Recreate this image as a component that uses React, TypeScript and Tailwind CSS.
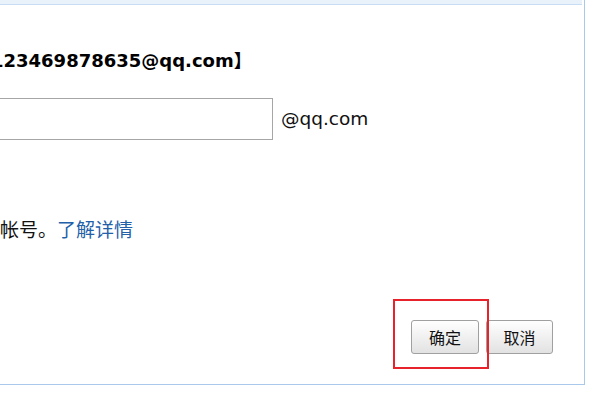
export default function App() {
  const latin = { fontFamily: '"DejaVu Sans", "Noto Sans CJK SC", sans-serif' };
  const cjk = { fontFamily: '"Noto Sans CJK SC", "DejaVu Sans", sans-serif' };
  return (
    <div className="relative w-[600px] h-[400px] bg-white overflow-hidden">
      <div className="flex flex-col w-[585px] h-[385px] border-r border-b border-[#a9c9ea]">
        <div className="h-[5px] w-[582px] bg-[#e9f2fb] border-b border-[#c6ddf3]" />

        <div
          className="mt-[43px] -ml-[9px] whitespace-nowrap text-[18px] leading-[26px] font-bold text-black"
          style={latin}
        >
          123469878635@qq.com】
        </div>

        <div className="mt-[24px] flex items-center gap-[8px]">
          <div className="-ml-[10px] w-[283px] h-[42px] border border-[#a6a6a6] bg-white" />
          <span className="text-[18.5px] leading-[26px] text-[#111]" style={latin}>
            @qq.com
          </span>
        </div>

        <div className="mt-[76px] whitespace-nowrap text-[19px] leading-[26px] text-[#111]" style={cjk}>
          帐号。<a className="text-[#2360aa]">了解详情</a>
        </div>

        <div className="mt-auto pb-[30px] pr-[31px] flex justify-end gap-[7px]">
          <button
            className="w-[68px] h-[34px] rounded-[3px] border border-[#a0a0a0] bg-gradient-to-b from-white to-[#e2e2e2] text-[16px] text-[#111]"
            style={cjk}
          >
            确定
          </button>
          <button
            className="w-[67px] h-[34px] rounded-[3px] border border-[#a0a0a0] bg-gradient-to-b from-white to-[#e2e2e2] text-[16px] text-[#111]"
            style={cjk}
          >
            取消
          </button>
        </div>
      </div>

      <div className="absolute left-[393px] top-[299px] w-[96px] h-[70px] border-2 border-[#e8222a]" />
    </div>
  );
}
